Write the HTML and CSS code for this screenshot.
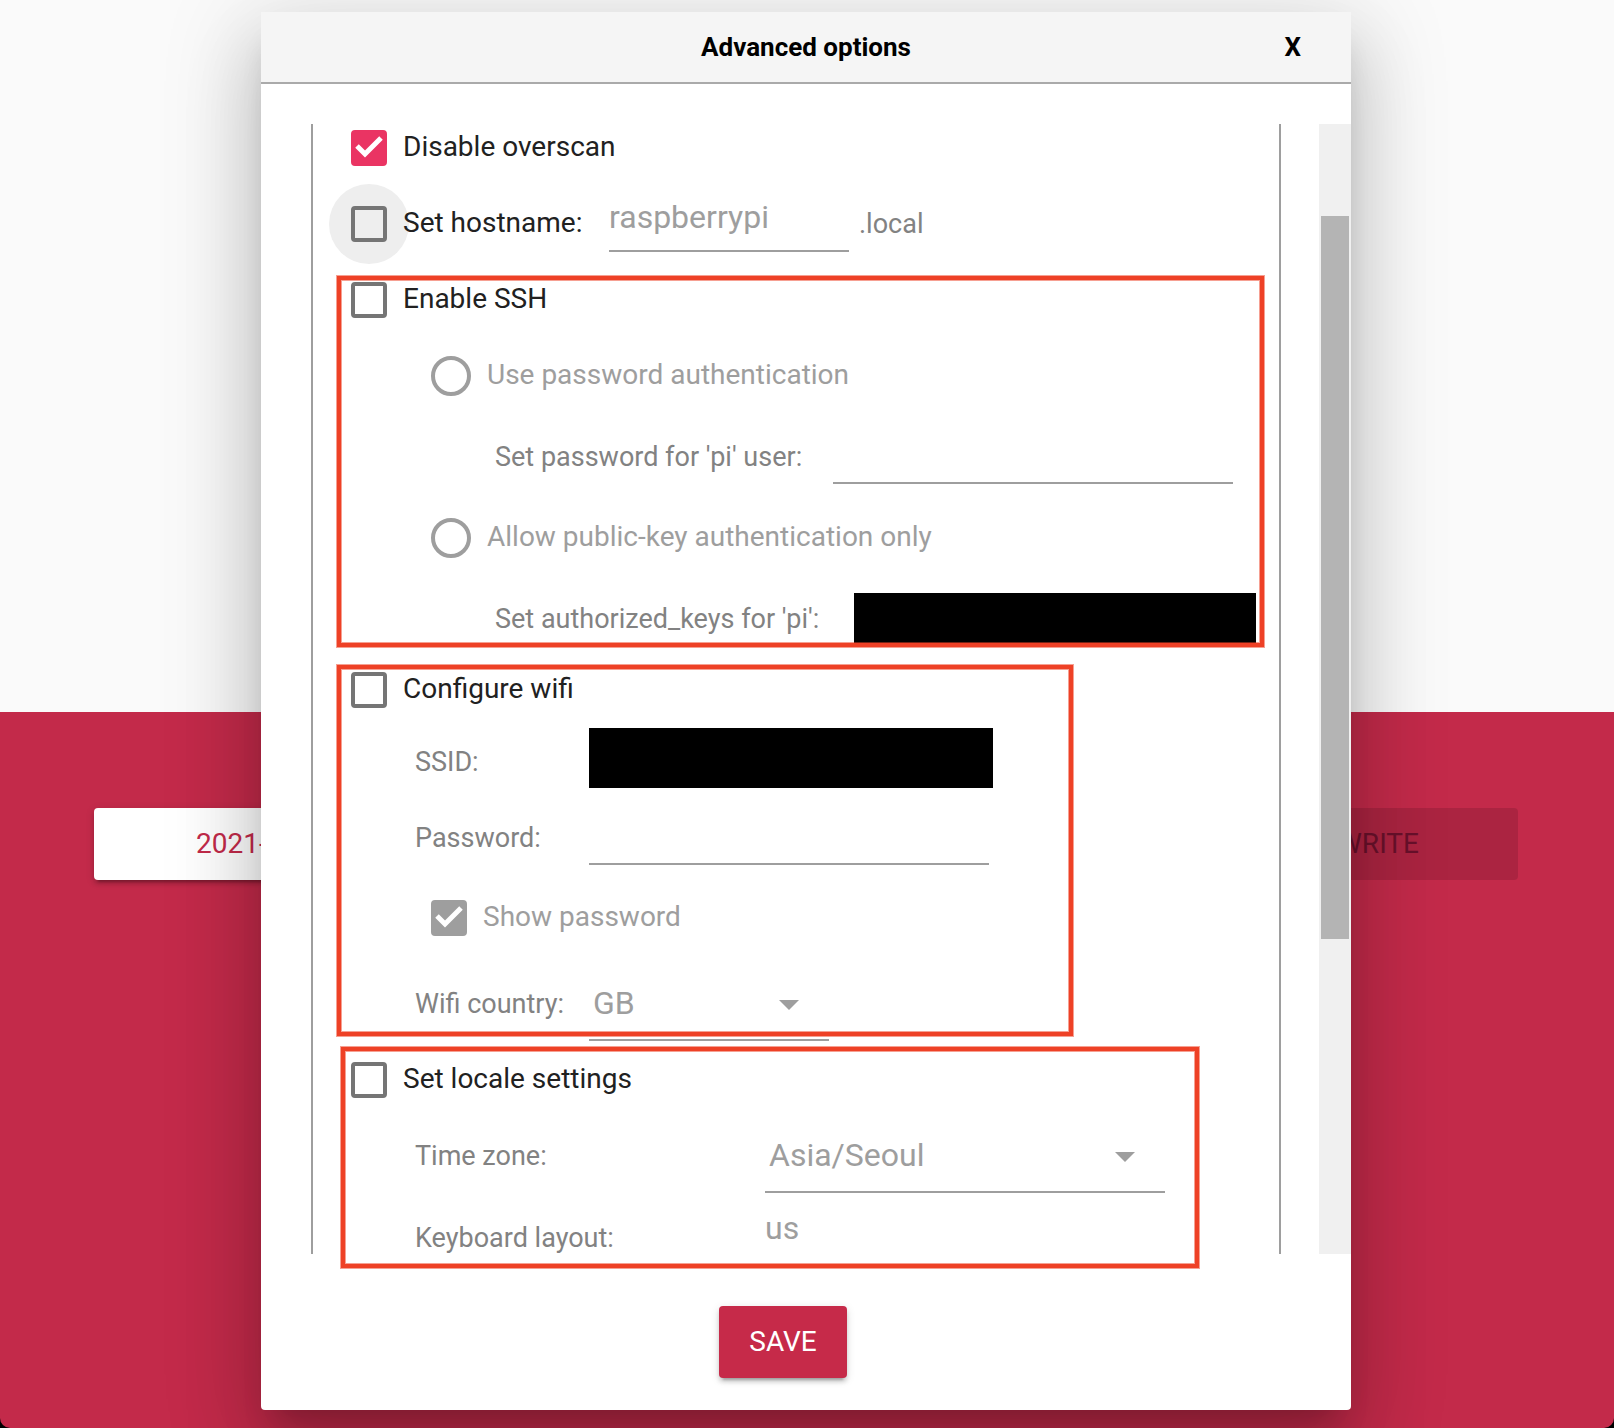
FILE: index.html
```html
<!DOCTYPE html>
<html lang="en">
<head>
<meta charset="utf-8">
<meta name="viewport" content="width=device-width, initial-scale=1">
<title>Advanced options</title>
<link rel="stylesheet" href="styles.css">
</head>
<body>
<div class="app">
  <main class="backdrop">
    <div class="banner"></div>
    <div class="panel">
      <button class="btn btn-image" type="button">2021-</button>
      <button class="btn btn-write" type="button" disabled>WRITE</button>
    </div>
  </main>

  <div class="overlay">
    <form class="modal" role="dialog" aria-labelledby="title">
      <header class="modal-header">
        <h1 class="modal-title" id="title">Advanced options</h1>
        <button class="modal-close" type="button">X</button>
      </header>

      <div class="modal-body">
        <div class="options">
          <div class="row row-first">
            <label class="choice">
              <span class="box">
                <input class="check" type="checkbox" checked>
                <svg class="tick" viewBox="0 0 36 36" aria-hidden="true"><path d="M6 16l8 8L30 8"/></svg>
              </span>
              Disable overscan
            </label>
          </div>
          <div class="row">
            <label class="choice choice-hostname">
              <span class="box box-hover"><input class="check" type="checkbox"></span>
              <span class="choice-text">Set hostname:</span>
            </label>
            <input class="field field-short" type="text" value="raspberrypi" aria-label="Hostname" disabled>
            <span class="suffix">.local</span>
          </div>

          <section class="group group-ssh">
            <div class="row">
              <label class="choice">
                <span class="box"><input class="check" type="checkbox"></span>
                Enable SSH
              </label>
            </div>
            <div class="row row-nested">
              <label class="choice choice-radio choice-disabled">
                <input class="radio" type="radio" name="auth" disabled>
                Use password authentication
              </label>
            </div>
            <div class="row row-tall row-deep">
              <label class="caption caption-userpw" for="userpw">Set password for 'pi' user:</label>
              <input class="field" id="userpw" type="password" disabled>
            </div>
            <div class="row row-nested">
              <label class="choice choice-radio choice-disabled">
                <input class="radio" type="radio" name="auth" disabled>
                Allow public-key authentication only
              </label>
            </div>
            <div class="row row-deep row-keys">
              <label class="caption caption-keys" for="keys">Set authorized_keys for 'pi':</label>
              <input class="redacted redacted-keys" id="keys" type="text" disabled>
            </div>
            <div class="mark mark-ssh"></div>
          </section>

          <section class="group group-wifi">
            <div class="row">
              <label class="choice">
                <span class="box"><input class="check" type="checkbox"></span>
                Configure wifi
              </label>
            </div>
            <div class="row row-indent row-ssid">
              <label class="caption caption-wifi" for="ssid">SSID:</label>
              <input class="redacted redacted-ssid" id="ssid" type="text" disabled>
            </div>
            <div class="row row-indent">
              <label class="caption caption-wifi" for="wifipw">Password:</label>
              <input class="field" id="wifipw" type="text" disabled>
            </div>
            <div class="row row-tall row-nested">
              <label class="choice choice-disabled">
                <span class="box">
                  <input class="check" type="checkbox" checked disabled>
                  <svg class="tick" viewBox="0 0 36 36" aria-hidden="true"><path d="M6 16l8 8L30 8"/></svg>
                </span>
                Show password
              </label>
            </div>
            <div class="row row-select row-indent">
              <label class="caption caption-wifi" for="country">Wifi country:</label>
              <span class="picker picker-short">
                <select class="select" id="country" disabled><option>GB</option></select>
                <svg class="arrow" viewBox="0 0 20 10" aria-hidden="true"><path d="M0 0h20L10 10z"/></svg>
              </span>
            </div>
            <div class="mark mark-wifi"></div>
          </section>

          <section class="group group-locale">
            <div class="row row-locale">
              <label class="choice">
                <span class="box"><input class="check" type="checkbox"></span>
                Set locale settings
              </label>
            </div>
            <div class="row row-select row-indent">
              <label class="caption caption-locale" for="zone">Time zone:</label>
              <span class="picker">
                <select class="select" id="zone" disabled><option>Asia/Seoul</option></select>
                <svg class="arrow" viewBox="0 0 20 10" aria-hidden="true"><path d="M0 0h20L10 10z"/></svg>
              </span>
            </div>
            <div class="row row-indent row-keyboard">
              <label class="caption caption-locale" for="layout">Keyboard layout:</label>
              <input class="field" id="layout" type="text" value="us" disabled>
            </div>
            <div class="mark mark-locale"></div>
          </section>
        </div>
        <div class="scrollbar"><div class="thumb"></div></div>
      </div>

      <footer class="modal-footer">
        <button class="btn btn-save" type="button">SAVE</button>
      </footer>
    </form>
  </div>
</div>
</body>
</html>
```
FILE: styles.css
```css
*, *::before, *::after { box-sizing: border-box; }

body {
  margin: 0;
  background: #000;
  font-family: Roboto, "Liberation Sans", sans-serif;
  font-size: 28px;
  color: #212121;
}

input, select, button { font-family: inherit; margin: 0; }

/* The page and the dialog share one grid cell */
.app {
  display: grid;
  min-height: 100vh;
  border-radius: 0 0 10px 10px;
  overflow: hidden;
}

.backdrop, .overlay { grid-area: 1 / 1; min-width: 0; }

.backdrop {
  display: grid;
  grid-template-rows: 712fr 716fr;
}

.banner { background: #fafafa; }

.panel {
  display: flex;
  justify-content: space-between;
  align-items: flex-start;
  padding: 96px 96px 0 94px;
  background: #c32a4a;
}

.btn {
  height: 72px;
  padding: 0 0 2px;
  border: 0;
  border-radius: 4px;
  font-size: 28px;
  box-shadow: 0 6px 2px -4px rgba(0, 0, 0, .2), 0 4px 4px rgba(0, 0, 0, .14), 0 2px 10px rgba(0, 0, 0, .12);
}

.btn-image {
  width: 400px;
  padding-left: 102px;
  background: #fff;
  color: #c32a4a;
  text-align: left;
}

.btn-write {
  width: 280px;
  background: rgba(0, 0, 0, .12);
  color: #69112b;
  box-shadow: none;
}

/* Dialog */
.overlay {
  display: flex;
  justify-content: center;
  align-items: flex-start;
  padding: 12px 2px 18px 0;
}

.modal {
  position: relative;
  flex: 0 1 1090px;
  background: #fff;
  border-radius: 0 0 4px 4px;
  box-shadow: 0 22px 30px -14px rgba(0, 0, 0, .2), 0 48px 76px 6px rgba(0, 0, 0, .14), 0 18px 92px 16px rgba(0, 0, 0, .12);
}

.modal-header {
  display: grid;
  grid-template-columns: 1fr auto 1fr;
  align-items: center;
  height: 72px;
  padding: 0 50px;
  background: #f5f5f5;
  border-bottom: 2px solid #aaa;
  color: #000;
}

.modal-title {
  grid-column: 2;
  margin: 0;
  font-size: 26px;
  font-weight: 700;
}

.modal-close {
  justify-self: end;
  padding: 0;
  border: 0;
  background: none;
  color: #000;
  font-size: 26px;
  font-weight: 700;
}

.modal-body {
  display: flex;
  padding: 40px 0 0 50px;
}

.options {
  flex: 1;
  min-width: 0;
  border: solid #9e9e9e;
  border-width: 0 2px;
}

.scrollbar {
  flex: none;
  width: 32px;
  margin-left: 38px;
  padding: 92px 2px 0;
  background: #f0f0f0;
}

.thumb { height: 723px; background: #b4b4b4; }

.modal-footer {
  display: flex;
  justify-content: center;
  padding: 52px 46px 32px 0;
}

.btn-save {
  width: 128px;
  background: #c62a49;
  color: #fff;
}

/* Rows */
.group { position: relative; }

.row {
  display: flex;
  align-items: center;
  height: 76px;
  padding-left: 38px;
  white-space: nowrap;
}

.row-first { height: 62px; padding-bottom: 14px; }
.row-nested { padding-left: 118px; }
.row-indent { padding-left: 102px; }
.row-deep { padding-left: 182px; }
.row-tall { height: 86px; }
.row-select { height: 88px; }
.row-keys { padding-top: 10px; }
.row-ssid { height: 72px; padding-bottom: 4px; }
.group-wifi .row-tall { height: 84px; }
.row-locale { height: 64px; }
.row-keyboard { height: 54px; padding-top: 22px; overflow: hidden; }

.choice {
  display: flex;
  align-items: flex-start;
  gap: 16px;
  line-height: 34px;
}

.choice-radio { line-height: 38px; }
.choice-hostname { flex: 0 0 258px; }
.choice-text { position: relative; }
.choice-disabled { color: #9e9e9e; }

.caption, .suffix { color: #828282; font-size: 27px; }
.suffix { margin-left: 10px; }
.caption { flex: none; }
.caption-userpw { width: 338px; }
.caption-keys { width: 359px; }
.caption-wifi { width: 174px; }
.caption-locale { width: 350px; }

/* Tick boxes and radios */
.box {
  position: relative;
  display: block;
  width: 36px;
  height: 36px;
}

.box-hover::before {
  content: "";
  position: absolute;
  inset: -22px;
  border-radius: 50%;
  background: #eee;
}

.check {
  position: relative;
  display: block;
  appearance: none;
  width: 36px;
  height: 36px;
  border: 4px solid #757575;
  border-radius: 4px;
}

.check:checked { border-color: #ea3463; background: #ea3463; }
.check:checked:disabled { border-color: #9e9e9e; background: #9e9e9e; }

.tick {
  position: absolute;
  inset: 0;
  fill: none;
  stroke: #fff;
  stroke-width: 5;
}

.radio {
  appearance: none;
  width: 40px;
  height: 40px;
  border: 4px solid #9e9e9e;
  border-radius: 50%;
}

/* Fields */
.field {
  flex: none;
  width: 400px;
  height: 66px;
  margin-bottom: 12px;
  padding: 0 0 2px;
  border: 0;
  border-bottom: 2px solid #9e9e9e;
  background: none;
  color: #9e9e9e;
  font-size: 32px;
}

.field-short { width: 240px; margin-bottom: 10px; }
.row-keyboard .field { margin-bottom: 16px; }

.redacted { flex: none; padding: 0; border: 0; background: #000; }
.redacted-keys { width: 402px; height: 50px; margin-bottom: 2px; }
.redacted-ssid { width: 404px; height: 60px; margin-bottom: 8px; }

.picker { position: relative; width: 400px; }
.picker-short { width: 240px; }

.select {
  display: block;
  appearance: none;
  width: 100%;
  height: 74px;
  padding: 0 4px;
  border: 0;
  border-bottom: 2px solid #9e9e9e;
  border-radius: 0;
  background: none;
  color: #9e9e9e;
  font-size: 32px;
  opacity: 1;
}

.arrow {
  position: absolute;
  top: 33px;
  right: 30px;
  width: 20px;
  height: 10px;
  fill: #9e9e9e;
  pointer-events: none;
}

/* Red highlight frames drawn over the groups */
.mark {
  position: absolute;
  border: 4px solid #ee4126;
  box-shadow: 0 0 0 1px rgba(238, 65, 38, .5), inset 0 0 0 1px rgba(238, 65, 38, .5);
  pointer-events: none;
}

.mark-ssh { top: 14px; right: 15px; bottom: 5px; left: 24px; }
.mark-wifi { top: 13px; bottom: 12px; left: 24px; width: 736px; }
.mark-locale { top: -1px; bottom: -14px; left: 28px; width: 858px; }
```
